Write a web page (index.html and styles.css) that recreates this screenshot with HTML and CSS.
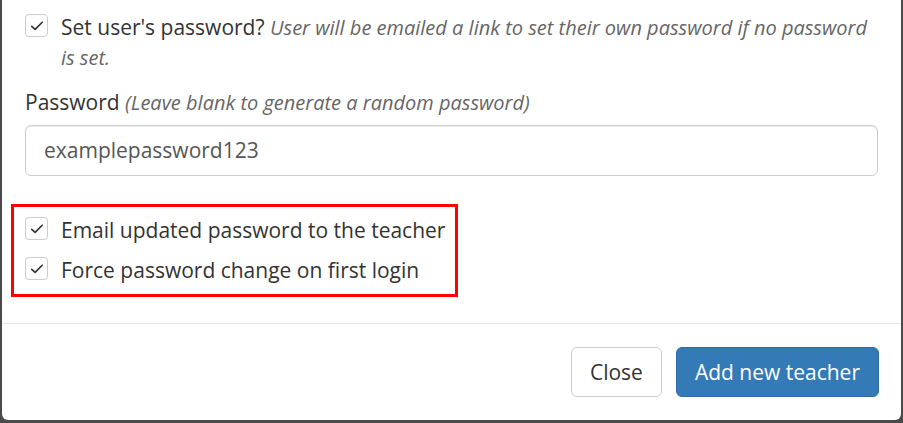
FILE: index.html
```html
<!DOCTYPE html>
<html>
<head>
<meta charset="utf-8">
<link rel="stylesheet" href="styles.css">
</head>
<body>
<div class="modal">
  <div class="modal-body">
    <label class="check-row wrap">
      <span class="box"><svg viewBox="0 0 24 24" width="18" height="18"><path d="M5 12.5l4.5 4L19 7" fill="none" stroke="#333" stroke-width="2.2" stroke-linecap="round" stroke-linejoin="round"/></svg></span>
      <span class="text">Set user's password? <em class="help">User will be emailed a link to set their own password if no password is set.</em></span>
    </label>
    <div class="form-group">
      <div class="label">Password <em class="help">(Leave blank to generate a random password)</em></div>
      <div class="input">examplepassword123</div>
    </div>
    <div class="highlight">
      <label class="check-row">
        <span class="box"><svg viewBox="0 0 24 24" width="18" height="18"><path d="M5 12.5l4.5 4L19 7" fill="none" stroke="#333" stroke-width="2.2" stroke-linecap="round" stroke-linejoin="round"/></svg></span>
        <span class="text">Email updated password to the teacher</span>
      </label>
      <label class="check-row">
        <span class="box"><svg viewBox="0 0 24 24" width="18" height="18"><path d="M5 12.5l4.5 4L19 7" fill="none" stroke="#333" stroke-width="2.2" stroke-linecap="round" stroke-linejoin="round"/></svg></span>
        <span class="text">Force password change on first login</span>
      </label>
    </div>
  </div>
  <div class="modal-footer">
    <button class="btn btn-default">Close</button>
    <button class="btn btn-primary">Add new teacher</button>
  </div>
</div>
</body>
</html>
```
FILE: styles.css
```css
html, body {
  margin: 0;
  padding: 0;
  background: #4a4a4a;
  height: 423px;
  overflow: hidden;
}
body {
  font-family: "Open Sans", "Liberation Sans", sans-serif;
  font-size: 21px;
  line-height: 30px;
  color: #333;
}
.modal {
  background: #fff;
  margin: 0 2px 0 2px;
  border-radius: 0 0 6px 6px;
  width: 899px;
}
.modal-body {
  padding: 12px 23px 26px 23px;
}
.check-row {
  display: flex;
  align-items: flex-start;
  gap: 13px;
}
.box {
  flex: none;
  width: 21px;
  height: 21px;
  margin-top: 2px;
  border: 1.5px solid #ccc;
  border-radius: 4px;
  display: flex;
  align-items: center;
  justify-content: center;
}
.help {
  color: #666;
  font-style: italic;
  font-size: 20px;
  line-height: 1;
}
.wrap {
  margin-bottom: 15px;
}
.form-group {
  margin-bottom: 28px;
}
.label {
  margin-bottom: 8px;
}
.input {
  box-sizing: border-box;
  height: 51px;
  border: 1.5px solid #ccc;
  border-radius: 6px;
  padding: 9px 18px;
  color: #555;
  box-shadow: inset 0 1px 1px rgba(0,0,0,0.075);
}
.highlight {
  margin-left: -14px;
  width: 430px;
  border: 3px solid #f00;
  padding: 8px 0 9px 11px;
  display: flex;
  flex-direction: column;
  gap: 10px;
}
.modal-footer {
  border-top: 1px solid #e5e5e5;
  padding: 23px 22px 23px 23px;
  display: flex;
  justify-content: flex-end;
  gap: 14px;
}
.btn {
  font-family: inherit;
  font-size: 21px;
  line-height: 30px;
  padding: 9px 18px;
  border-radius: 6px;
  border: 1.5px solid;
  cursor: pointer;
}
.btn-default {
  background: #fff;
  border-color: #ccc;
  color: #333;
}
.btn-primary {
  background: #337ab7;
  border-color: #2e6da4;
  color: #fff;
}
```
